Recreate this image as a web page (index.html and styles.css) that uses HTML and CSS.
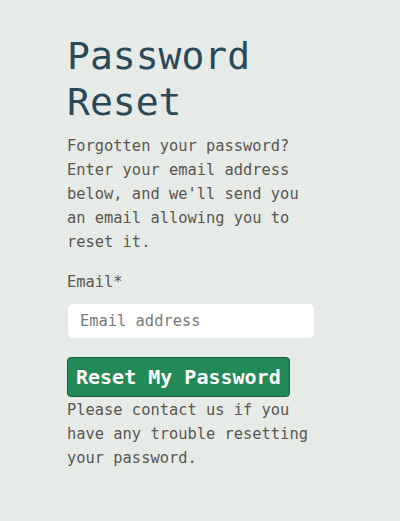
FILE: index.html
```html
<!DOCTYPE html>
<html lang="en">
<head>
<meta charset="utf-8">
<title>Password Reset</title>
<link rel="stylesheet" href="styles.css">
</head>
<body>
<main class="page">
  <h1 class="title">Password Reset</h1>
  <p class="intro">Forgotten your password? Enter your email address below, and we'll send you an email allowing you to reset it.</p>
  <form class="form">
    <label class="label" for="email">Email*</label>
    <input class="input" id="email" type="email" placeholder="Email address">
    <button class="btn" type="button">Reset My Password</button>
  </form>
  <p class="note">Please contact us if you have any trouble resetting your password.</p>
</main>
</body>
</html>
```
FILE: styles.css
```css
html, body {
  margin: 0;
  padding: 0;
}
body {
  background: #e6ebe8;
  font-family: "DejaVu Sans Mono", monospace;
  font-size: 15.4px;
  line-height: 24px;
  color: #5a5650;
}
.page {
  width: 248px;
  padding: 34px 0 40px 67px;
}
.title {
  margin: 0;
  font-size: 38px;
  line-height: 1.2;
  font-weight: normal;
  color: #2a4858;
}
.intro {
  margin: 9px 0 0;
}
.form {
  display: flex;
  flex-direction: column;
  align-items: flex-start;
  margin-top: 16px;
}
.label {
  margin-bottom: 9px;
}
.input {
  box-sizing: border-box;
  width: 248px;
  height: 36px;
  padding: 0 12px;
  border: 1px solid #e2e6e4;
  border-radius: 6px;
  background: #fff;
  font-family: inherit;
  font-size: 15.4px;
  color: #333;
}
.input::placeholder {
  color: #7a7a7a;
}
.btn {
  margin-top: 18px;
  box-sizing: border-box;
  height: 40px;
  padding: 0 8px;
  border: 1px solid #1b5e3c;
  border-radius: 4px;
  background: #218a56;
  color: #fff;
  font-family: inherit;
  font-weight: bold;
  font-size: 20px;
  line-height: 24px;
}
.note {
  margin: 1px 0 0;
}
```
